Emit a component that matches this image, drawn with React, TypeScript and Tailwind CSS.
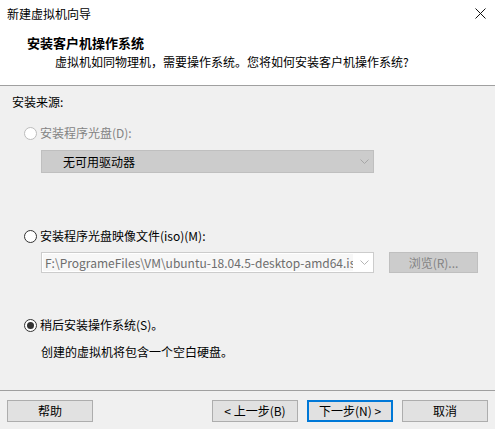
import React, { useState } from "react";

type Source = "disc" | "iso" | "later";

const FONT = '"Noto Sans CJK SC", "Noto Sans", sans-serif';

// Classic Win32-style radio button
function Radio({ checked, disabled }: { checked?: boolean; disabled?: boolean }) {
  return (
    <span
      className={`flex h-[13px] w-[13px] shrink-0 items-center justify-center rounded-full border bg-white ${
        disabled ? "border-[#bcbcbc]" : "border-[#333333]"
      }`}
    >
      {checked && <span className="h-[7px] w-[7px] rounded-full bg-[#333333]" />}
    </span>
  );
}

function Chevron({ color }: { color: string }) {
  return (
    <svg width="9" height="5" viewBox="0 0 9 5" fill="none">
      <path d="M0.5 0.5 L4.5 4.5 L8.5 0.5" stroke={color} strokeWidth="1" />
    </svg>
  );
}

function WizardButton({ label, primary }: { label: string; primary?: boolean }) {
  return (
    <button
      className={`flex h-[22px] w-[86px] items-center justify-center bg-[#e1e1e1] text-[12px] text-black ${
        primary ? "border-2 border-[#0078d7]" : "border border-[#adadad]"
      }`}
    >
      {label}
    </button>
  );
}

export default function App() {
  const [source, setSource] = useState<Source>("later");

  return (
    <div
      className="flex h-[429px] w-[495px] flex-col overflow-hidden bg-[#f0f0f0] text-[12px] text-black"
      style={{ fontFamily: FONT }}
    >
      {/* title bar + page header */}
      <div className="h-[86px] shrink-0 border-b border-[#a0a0a0] bg-white">
        <div className="flex h-[29px] items-start justify-between pl-[7px] pr-[9px]">
          <span className="mt-[6px] leading-[16px]">新建虚拟机向导</span>
          <svg className="mt-[8px]" width="11" height="11" viewBox="0 0 11 11" fill="none">
            <path d="M0.5 0.5 L10.5 10.5 M10.5 0.5 L0.5 10.5" stroke="#111" strokeWidth="1" />
          </svg>
        </div>
        <div className="mt-[5px] pl-[27px] text-[13px] font-bold leading-[18px]">安装客户机操作系统</div>
        <div className="mt-[2px] pl-[55px] leading-[16px]">
          虚拟机如同物理机，需要操作系统。您将如何安装客户机操作系统?
        </div>
      </div>

      {/* install source options */}
      <div className="flex flex-1 flex-col pl-[12px] pt-[8px]">
        <div className="leading-[16px]">安装来源:</div>

        <div className="mt-[15px] flex items-center pl-[12px] leading-[16px] text-[#838383]">
          <Radio disabled />
          <span className="ml-[3px]">安装程序光盘(D):</span>
        </div>
        <div className="ml-[29px] mt-[9px] flex h-[23px] w-[333px] items-center justify-between border border-[#bfbfbf] bg-[#cccccc] pl-[21px] pr-[4px]">
          <span>无可用驱动器</span>
          <Chevron color="#a6a6a6" />
        </div>

        <button
          className="mt-[55px] flex items-center pl-[12px] text-left leading-[16px]"
          onClick={() => setSource("iso")}
        >
          <Radio checked={source === "iso"} />
          <span className="ml-[3px]">安装程序光盘映像文件(iso)(M):</span>
        </button>
        <div className="ml-[29px] mt-[8px] flex items-center">
          <div className="flex h-[21px] w-[333px] items-center border border-[#cccccc] bg-white">
            <div className="ml-[1px] h-[17px] w-[310px] overflow-hidden whitespace-nowrap bg-[#f7f7f7] pl-[2px] leading-[17px] text-[#6d6d6d]">
              F:\ProgrameFiles\VM\ubuntu-18.04.5-desktop-amd64.iso
            </div>
            <span className="ml-auto mr-[4px]">
              <Chevron color="#b5b5b5" />
            </span>
          </div>
          <div className="ml-[15px] flex h-[21px] w-[89px] items-center justify-center border border-[#bfbfbf] bg-[#cccccc] text-[#838383]">
            浏览(R)...
          </div>
        </div>

        <button
          className="mt-[44px] flex items-center pl-[12px] text-left leading-[16px]"
          onClick={() => setSource("later")}
        >
          <Radio checked={source === "later"} />
          <span className="ml-[3px]">稍后安装操作系统(S)。</span>
        </button>
        <div className="mt-[11px] pl-[29px] leading-[16px]">创建的虚拟机将包含一个空白硬盘。</div>
      </div>

      {/* wizard navigation */}
      <div className="flex h-[39px] shrink-0 items-start justify-between border-t border-[#a0a0a0] px-[7px] pt-[9px]">
        <WizardButton label="帮助" />
        <div className="flex gap-[9px]">
          <WizardButton label="< 上一步(B)" />
          <WizardButton label="下一步(N) >" primary />
          <WizardButton label="取消" />
        </div>
      </div>
    </div>
  );
}
